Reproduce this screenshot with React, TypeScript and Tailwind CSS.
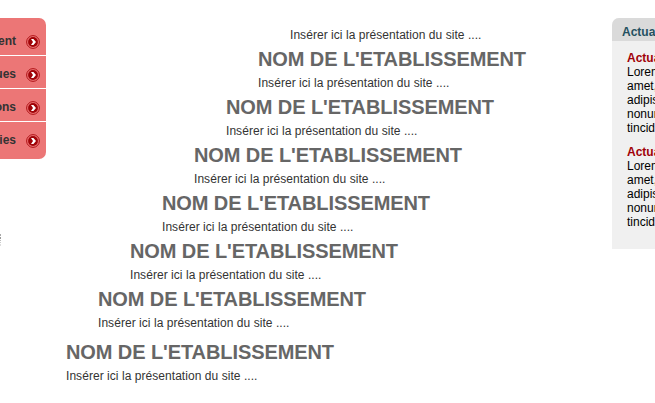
const menu = [
  { label: "ent", row: "h-[37px] pt-4" },
  { label: "ues", row: "h-8 pt-[11px]" },
  { label: "ons", row: "h-8 pt-[11px]" },
  { label: "ies", row: "h-[37px] pt-[11px]" },
];

const steps = [
  "pl-[192px]",
  "pl-[160px]",
  "pl-32",
  "pl-24",
  "pl-16",
  "pl-8",
  "pl-0 pt-[5px]",
];

const news = ["Actualité 1", "Actualité 2"];

function Arrow() {
  return (
    <svg className="ml-2.5 h-3.5 w-3.5 shrink-0" viewBox="0 0 14 14">
      <circle cx="7" cy="7" r="6.4" fill="none" stroke="#b01418" strokeWidth="1" />
      <circle cx="7" cy="7" r="4.9" fill="#a00408" />
      <path d="M5 3.9H7.4L10 7 7.4 10.1H5L7 7Z" fill="#fff" />
    </svg>
  );
}

export default function App() {
  return (
    <div className="flex h-[403px] w-[655px] items-start overflow-hidden bg-white pt-[18px] font-['Liberation_Sans',Arial,sans-serif] text-[12px] leading-[14px] text-[#333]">
      <div className="w-[46px] shrink-0">
        <nav className="flex flex-col gap-px overflow-hidden rounded-r-[7px]">
          {menu.map((item) => (
            <div key={item.label} className={`flex items-start justify-end bg-[#ec7676] pr-1.5 ${item.row}`}>
              <span className="font-bold">{item.label}</span>
              <span className="pt-px">
                <Arrow />
              </span>
            </div>
          ))}
        </nav>
        <div className="mt-[75px] flex w-px flex-col gap-px">
          <div className="h-0.5 bg-[#aaa]" />
          <div className="h-0.5 bg-[#999]" />
          <div className="h-px bg-[#bbb]" />
          <div className="h-px bg-[#ccc]" />
          <div className="h-0.5 bg-[#ddd]" />
        </div>
      </div>
      <main className="ml-5 flex w-[546px] shrink-0 flex-col gap-[5px] pt-2.5">
        <p className="pl-56 tracking-[0.05px]">Insérer ici la présentation du site ....</p>
        {steps.map((step) => (
          <section key={step} className={step}>
            <h1 className="mb-[5px] text-[20px] leading-6 font-bold tracking-[-0.09px] whitespace-nowrap text-[#666]">
              NOM DE L'ETABLISSEMENT
            </h1>
            <p className="tracking-[0.05px]">Insérer ici la présentation du site ....</p>
          </section>
        ))}
      </main>
      <aside className="h-[231px] w-[180px] shrink-0 overflow-hidden rounded-tl-[7px] bg-[#f0f0f0] text-black">
        <h2 className="h-[23px] bg-[#dadada] pt-[7px] pl-2.5 font-bold text-[#245060]">Actualités</h2>
        <div className="flex flex-col gap-2.5 pt-2.5 pl-[15px]">
          {news.map((title) => (
            <article key={title}>
              <h3 className="font-bold text-[#a00008]">{title}</h3>
              <p className="whitespace-nowrap">
                Lorem ipsum dolor sit
                <br />
                amet, consectetuer
                <br />
                adipiscing elit, sed diam
                <br />
                nonummy nibh euismod
                <br />
                tincidunt ut laoreet
              </p>
            </article>
          ))}
        </div>
      </aside>
    </div>
  );
}
